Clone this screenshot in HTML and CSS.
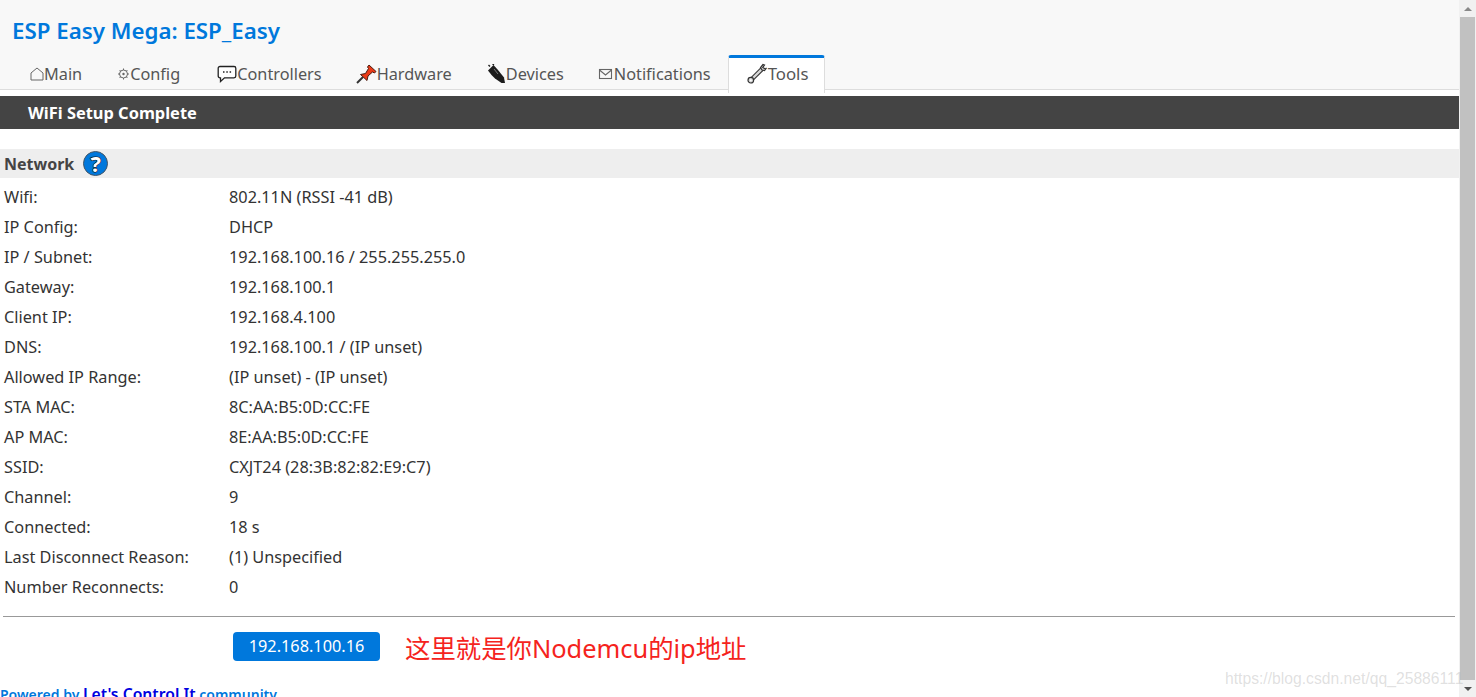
FILE: index.html
```html
<!DOCTYPE html>
<html lang="zh">
<head>
<meta charset="utf-8">
<title>ESP Easy Mega: ESP_Easy</title>
<link rel="stylesheet" href="styles.css">
</head>
<body>
<div class="window">
  <main class="page">
    <header class="head">
      <h1 class="title">ESP Easy Mega: ESP_Easy</h1>
      <nav class="tabs">
        <a class="tab"><svg class="ico" width="14" height="16" viewBox="0 0 14 16"><path d="M1 14V7L7 2l6 5V14Z" fill="none" stroke="#666" stroke-width="1"/></svg>Main</a>
        <a class="tab tab-config"><svg class="ico" width="13" height="16" viewBox="0 0 13 16"><circle cx="6.500" cy="8" r="4" fill="none" stroke="#666" stroke-width="1"/><circle cx="6.500" cy="8" r="1.200" fill="#666"/><path d="M6.500 2.500v1.500M6.500 12v1.500M1 8h1.500M10.500 8H12M2.600 4.100l1.100 1.100M9.300 10.800l1.100 1.100M2.600 11.900l1.100-1.100M9.300 5.200l1.100-1.100" stroke="#666" stroke-width="1"/></svg>Config</a>
        <a class="tab tab-tight"><svg class="ico" width="20" height="18" viewBox="0 0 20 18"><path d="M3 1.500H17A1.800 1.800 0 0 1 18.800 3.300V11A1.800 1.800 0 0 1 17 12.800H7.500L3.500 16.500V12.800H3A1.800 1.800 0 0 1 1.200 11V3.300A1.800 1.800 0 0 1 3 1.500Z" fill="#fff" stroke="#222" stroke-width="1.300"/><path d="M6 7h1.500M9.300 7h1.500M12.600 7h1.500" stroke="#222" stroke-width="1.600"/></svg>Controllers</a>
        <a class="tab"><svg class="ico" width="21" height="20" viewBox="0 0 21 20"><path d="M1 19L7 13" stroke="#333" stroke-width="2"/><path d="M4.500 10.500L9.500 9.500 12.500 4.500 11.500 3 13 1 20 7.500 18.500 9 16.500 8 12 12 11 16.500Z" fill="#ea3a18" stroke="#4a1c10" stroke-width="1"/></svg>Hardware</a>
        <a class="tab tab-tight"><svg class="ico" width="19" height="20" viewBox="0 0 19 20"><path d="M1 6.500L6.500 1 11 6 17 13.500 18 19 14.500 19 8 14.500 4.500 11Z" fill="#1c1c1c"/><path d="M3 2.500L1.500 1M7 1L5.500 0" stroke="#1c1c1c" stroke-width="1.400"/><path d="M7 5l4 5" stroke="#777" stroke-width="1"/></svg>Devices</a>
        <a class="tab"><svg class="ico" width="16" height="16" viewBox="0 0 16 16"><rect x="1.500" y="3.500" width="12" height="9" fill="none" stroke="#666" stroke-width="1.100"/><path d="M1.500 4L7.500 9 13.500 4" fill="none" stroke="#666" stroke-width="1.100"/></svg>Notifications</a>
        <a class="tab is-active"><svg class="ico" width="21" height="21" viewBox="0 0 21 21"><path d="M4.500 16.500L15.500 5.500" stroke="#333" stroke-width="4.500"/><path d="M4.500 16.500L15.500 5.500" stroke="#d8d8d8" stroke-width="2.400"/><circle cx="3.800" cy="17.200" r="2.800" fill="#d8d8d8" stroke="#333" stroke-width="1.200"/><circle cx="3.800" cy="17.200" r="1" fill="#fff"/><path d="M16 1.500L13.500 4.500 15 7 17.500 7.500 19.500 5 18.500 6 15.800 4.500 17.500 2Z" fill="#d8d8d8" stroke="#333" stroke-width="1.200"/></svg>Tools</a>
      </nav>
    </header>
    <h2 class="banner">WiFi Setup Complete</h2>
    <section class="network">
      <h3 class="section-head">Network <span class="help">?</span></h3>
      <dl class="rows">
        <dt>Wifi:</dt><dd>802.11N (RSSI -41 dB)</dd>
        <dt>IP Config:</dt><dd>DHCP</dd>
        <dt>IP / Subnet:</dt><dd>192.168.100.16 / 255.255.255.0</dd>
        <dt>Gateway:</dt><dd>192.168.100.1</dd>
        <dt>Client IP:</dt><dd>192.168.4.100</dd>
        <dt>DNS:</dt><dd>192.168.100.1 / (IP unset)</dd>
        <dt>Allowed IP Range:</dt><dd>(IP unset) - (IP unset)</dd>
        <dt>STA MAC:</dt><dd>8C:AA:B5:0D:CC:FE</dd>
        <dt>AP MAC:</dt><dd>8E:AA:B5:0D:CC:FE</dd>
        <dt>SSID:</dt><dd>CXJT24 (28:3B:82:82:E9:C7)</dd>
        <dt>Channel:</dt><dd>9</dd>
        <dt>Connected:</dt><dd>18 s</dd>
        <dt>Last Disconnect Reason:</dt><dd>(1) Unspecified</dd>
        <dt>Number Reconnects:</dt><dd>0</dd>
      </dl>
    </section>
    <hr class="rule">
    <div class="action">
      <a class="ip-button">192.168.100.16</a>
      <span class="note">这里就是你Nodemcu的ip地址</span>
    </div>
    <footer class="foot">Powered by <a class="foot-link">Let's Control It</a> community</footer>
  </main>
  <aside class="scrollbar">
    <span class="arrow arrow-up"></span>
    <span class="thumb"></span>
    <span class="arrow arrow-down"></span>
  </aside>
</div>
<div class="watermark">https://blog.csdn.net/qq_25886111</div>
</body>
</html>
```
FILE: styles.css
```css
* { box-sizing: border-box; }
html, body { margin: 0; height: 100%; overflow: hidden; background: #fff; }
body { font-family: "Noto Sans", "Noto Sans CJK SC", sans-serif; font-size: 16.3px; color: #444; }
.window { display: flex; height: 697px; }
.page { flex: 1; min-width: 0; overflow: hidden; }

.head { background: #f8f8f8; height: 90px; border-bottom: 1px solid #ddd; padding-top: 16px; }
.title { margin: 0 0 0 12px; font-size: 22.3px; line-height: 30px; font-weight: 600; color: #0078dc; }
.tabs { display: flex; margin-top: 9px; height: 35px; padding-left: 13px; }
.tab { display: flex; align-items: center; height: 35px; padding: 2px 18px 0 17px; font-size: 16.3px; color: #555; white-space: nowrap; }
.tab-config { padding-right: 20px; }
.tab-tight { padding-right: 17px; }
.ico { flex: none; }
.is-active { height: 38px; padding: 0 16px 4px 18px; margin-left: -1px; font-size: 16.8px; background: #fff; border: 1px solid #ddd; border-top: 3px solid #0078dc; border-bottom: 0; border-radius: 3px 3px 0 0; position: relative; }

.banner { margin: 6px 0 0; height: 33px; background: #444; color: #fff; font-size: 16.4px; font-weight: 700; line-height: 34px; padding-left: 28px; }

.network { margin-top: 20px; }
.section-head { margin: 0; height: 29px; padding: 1px 0 0 4px; background: #eee; color: #444; font-size: 16px; font-weight: 700; line-height: 29px; display: flex; align-items: center; gap: 9px; }
.help { width: 25px; height: 25px; margin-top: -1px; border-radius: 50%; background: #0078dc; border: 1px solid #456; color: #fff; font-size: 22px; font-weight: 700; line-height: 23px; text-align: center; -webkit-text-stroke: 1.200px #111; paint-order: stroke fill; }
.rows { margin: 4px 0 0; padding-left: 4px; display: grid; grid-template-columns: 225px 1fr; grid-auto-rows: 30px; }
.rows dt, .rows dd { margin: 0; line-height: 30px; color: #333; font-size: 16.3px; white-space: nowrap; }

.rule { margin: 14px 4px 0 3px; border: 0; border-top: 1px solid #999; height: 1px; }
.action { display: flex; align-items: center; margin: 14px 0 0 233px; height: 30px; }
.ip-button { width: 147px; height: 29px; background: #0078dc; color: #fff; border-radius: 4px; text-align: center; line-height: 29px; font-size: 16.3px; }
.note { margin: 4px 0 0 25px; color: #f5231d; font-size: 25.4px; line-height: 34px; }
.foot { margin-top: 23px; color: #0078dc; font-size: 14px; font-weight: 600; line-height: 20px; white-space: nowrap; }
.foot-link { color: #0000e0; font-size: 15.700px; }

.scrollbar { width: 17px; flex: none; background: #f1f1f1; display: flex; flex-direction: column; align-items: center; }
.arrow { flex: none; width: 17px; height: 17px; display: flex; }
.arrow-up::after { content: ""; margin: auto; border: 4px solid transparent; border-top: 0; border-bottom: 4px solid #888; }
.arrow-down::after { content: ""; margin: auto; border: 4px solid transparent; border-bottom: 0; border-top: 4px solid #505050; }
.thumb { flex: 1; width: 15px; background: #c1c1c1; }

.watermark { position: absolute; left: 1225px; top: 667px; font-family: "Liberation Sans", sans-serif; font-size: 15.700px; line-height: 24px; color: rgba(150,150,150,0.3); white-space: nowrap; }
```
